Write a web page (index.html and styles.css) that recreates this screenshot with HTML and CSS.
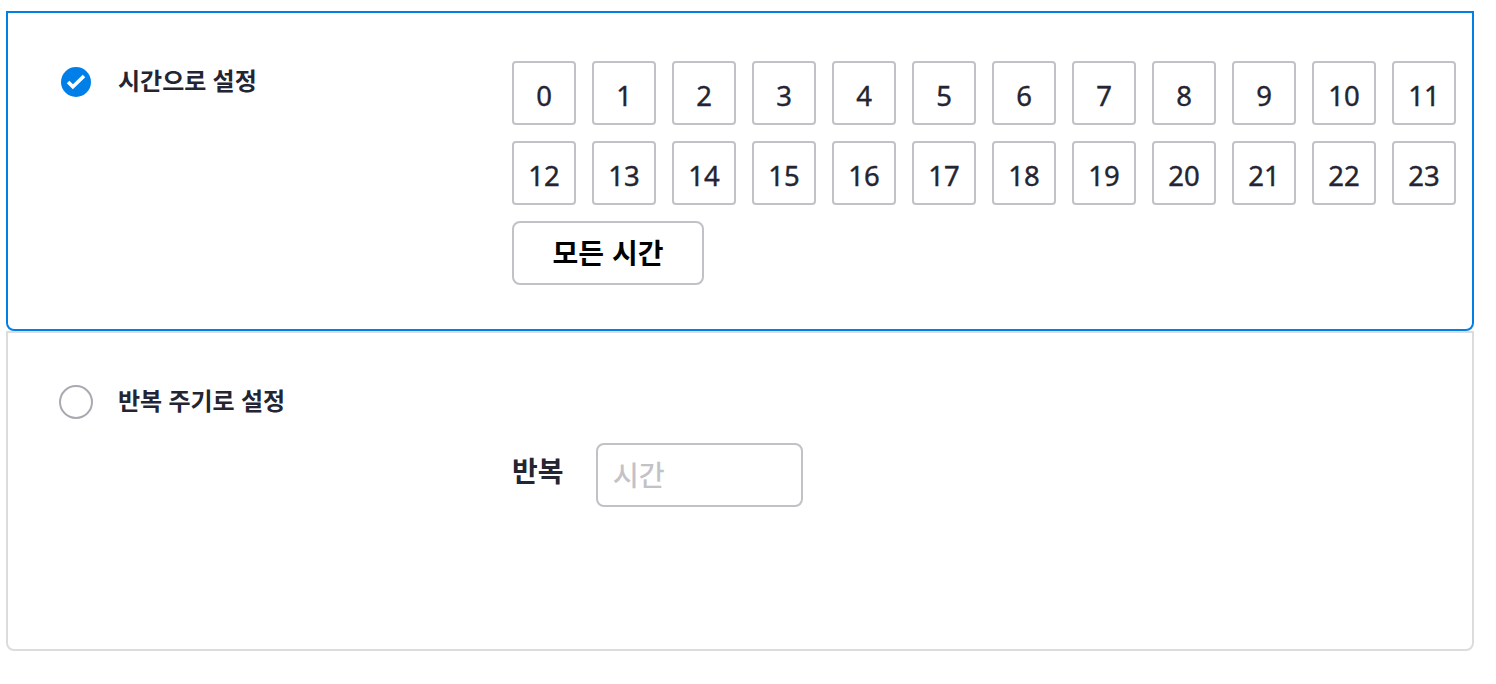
FILE: index.html
```html
<!DOCTYPE html>
<html lang="ko">
<head>
<meta charset="utf-8">
<title>시간 설정</title>
<link rel="stylesheet" href="styles.css">
</head>
<body>
<main class="options">
  <section class="option option-selected">
    <div class="option-label">
      <svg class="radio" width="34" height="34" viewBox="0 0 34 34"><circle cx="17" cy="17" r="15" fill="#007fe8"/><path d="M9.1 16.9l4.8 4.8L25 11" fill="none" stroke="#fff" stroke-width="3.6"/></svg>
      <span class="title">시간으로 설정</span>
    </div>
    <div class="hours">
      <span class="hour">0</span><span class="hour">1</span><span class="hour">2</span><span class="hour">3</span><span class="hour">4</span><span class="hour">5</span><span class="hour">6</span><span class="hour">7</span><span class="hour">8</span><span class="hour">9</span><span class="hour">10</span><span class="hour">11</span>
      <span class="hour">12</span><span class="hour">13</span><span class="hour">14</span><span class="hour">15</span><span class="hour">16</span><span class="hour">17</span><span class="hour">18</span><span class="hour">19</span><span class="hour">20</span><span class="hour">21</span><span class="hour">22</span><span class="hour">23</span>
      <button class="all-hours">모든 시간</button>
    </div>
  </section>
  <section class="option">
    <div class="option-label">
      <svg class="radio" width="34" height="34" viewBox="0 0 34 34"><circle cx="17" cy="17" r="16" fill="#fff" stroke="#a9a9b2" stroke-width="2"/></svg>
      <span class="title">반복 주기로 설정</span>
    </div>
    <div class="repeat">
      <span class="repeat-label">반복</span>
      <input class="repeat-input" type="text" placeholder="시간">
    </div>
  </section>
</main>
</body>
</html>
```
FILE: styles.css
```css
* { box-sizing: border-box; }
body {
  margin: 0;
  background: #fff;
  color: #232533;
  font-family: "Noto Sans", "Noto Sans CJK KR", sans-serif;
}
.options { width: 1468px; margin: 11px 0 0 6px; }
.option {
  display: flex;
  height: 320px;
  padding: 48px 16px 0 51px;
  border: 2px solid #dcdcdc;
  border-radius: 0 0 8px 8px;
}
.option-selected { border-color: #007fe4; }
.option-label { display: flex; width: 453px; height: 40px; padding-top: 4px; }
.radio { flex: none; margin-right: 25px; }
.title { font-size: 24px; line-height: 32px; font-weight: 700; white-space: nowrap; }
.hours {
  display: grid;
  grid-template-columns: repeat(12, 64px);
  grid-auto-rows: 64px;
  gap: 16px;
}
.hour {
  padding-top: 1px;
  border: 2px solid #c1c1c6;
  border-radius: 4px;
  font-family: "Noto Sans", sans-serif;
  font-size: 27.5px;
  line-height: 64px;
  text-align: center;
  -webkit-text-stroke: 0.4px #232533;
}
.all-hours {
  grid-column: span 3;
  width: 192px;
  height: 64px;
  padding: 0 0 2px;
  border: 2px solid #c1c1c6;
  border-radius: 8px;
  background: #fff;
  color: #000;
  font: 700 28px/58px "Noto Sans CJK KR", sans-serif;
}
.repeat { display: flex; height: 64px; margin-top: 62px; }
.repeat-label { width: 84px; font-size: 28px; line-height: 56px; font-weight: 700; }
.repeat-input {
  width: 207px;
  height: 64px;
  padding: 0 15px 2px;
  border: 2px solid #c1c1c6;
  border-radius: 8px;
  font: 28px "Noto Sans CJK KR", sans-serif;
}
.repeat-input::placeholder { color: #c1c1c6; opacity: 1; -webkit-text-stroke: 0.4px #c1c1c6; }
```
